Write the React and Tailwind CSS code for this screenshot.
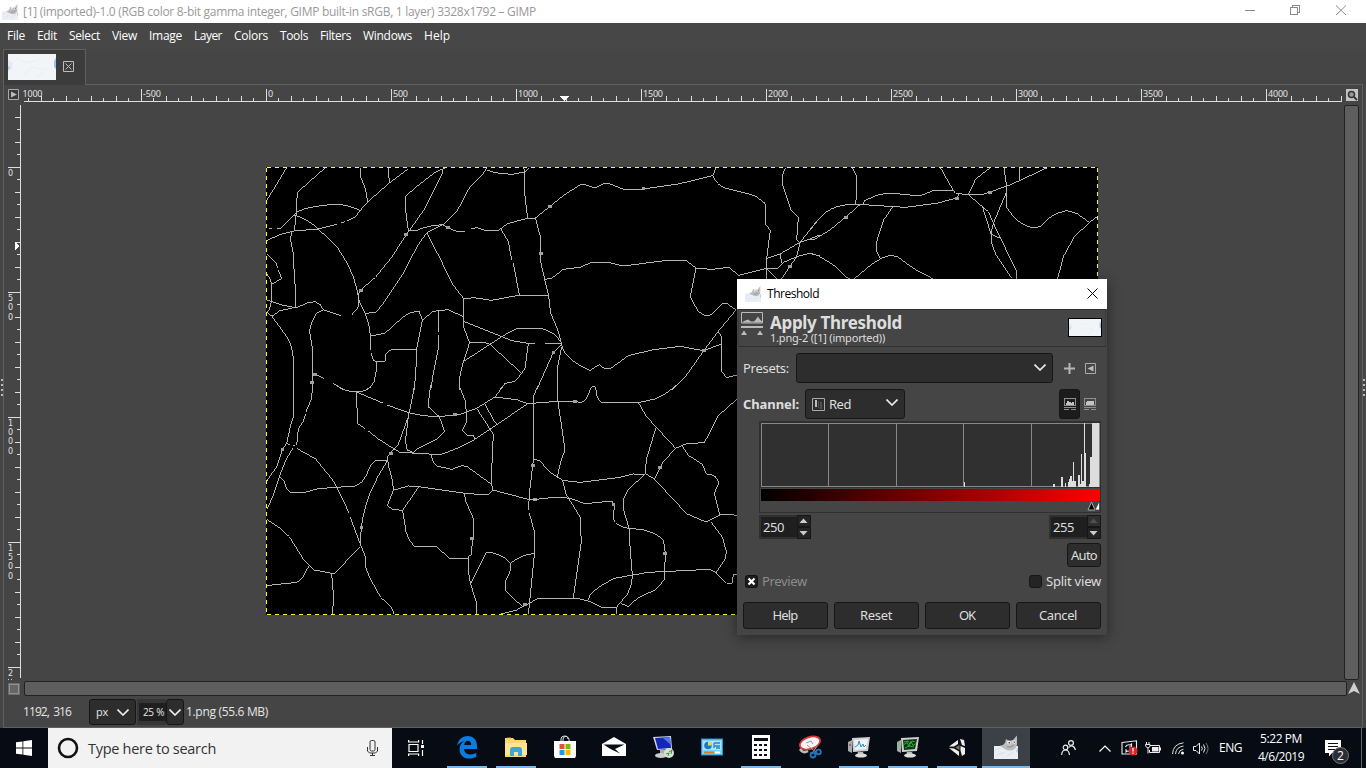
import React, { useLayoutEffect, useRef } from "react";

/* Text run whose tracking is computed so that it fills a known width. */
function Fit({ w, className = "", children }) {
  const ref = useRef(null);
  useLayoutEffect(() => {
    const el = ref.current;
    el.style.letterSpacing = "0px";
    const natural = el.getBoundingClientRect().width;
    const count = el.textContent.length;
    el.style.letterSpacing = (w - natural) / count + "px";
  }, [w, children]);
  return (
    <span ref={ref} className={"inline-block shrink-0 whitespace-pre " + className}>
      {children}
    </span>
  );
}

const UI = "font-['Open_Sans','Noto_Sans',sans-serif]";
const DLG = "font-['Noto_Sans','Open_Sans',sans-serif]";
const DIGIT = "font-['DejaVu_Sans',sans-serif]";

function Wilber({ className }) {
  return (
    <svg viewBox="0 0 24 24" className={className}>
      <path d="M0 11h24v13H0z" fill="#e9eff4" />
      <path d="M1 15l6-2M3 20l8-3M13 21l7-4" stroke="#d9e1e8" strokeWidth="1" />
      <path d="M24 12v6l-2-2z" fill="#a9cdf5" />
      <path d="M6 10.500Q11 11 12 4l3 2 4-1 4-4.500 0 9q-1 6-7 6-5 0-10-5z" fill="#bcbcbc" />
      <circle cx="15" cy="7.500" r="1.900" fill="#f0f0f0" />
      <circle cx="20" cy="7" r="1.700" fill="#f0f0f0" />
      <path d="M14.600 7h1.400v1.400H14.600zM19.600 6.500h1.300v1.300h-1.300z" fill="#444" />
      <path d="M13 12q4 1 7-2" stroke="#888" fill="none" />
    </svg>
  );
}

function Thumb({ className }) {
  return (
    <svg viewBox="0 0 48 26" preserveAspectRatio="none" className={className}>
      <rect width="48" height="26" fill="#f2f5f7" />
      <path d="M0 6l5 3-1 6-4 3z" fill="#e6eaf4" />
      <path d="M0 12l2 1-1 3-1-1z" fill="#a8cdf8" />
      <path d="M48 4l-2 3 0 6 2 2z" fill="#8fc2fa" />
      <path d="M8 4l12 5 10-3M14 22l10-9 14 3M28 24l8-6" stroke="#ebeff2" fill="none" />
    </svg>
  );
}

const MENUS = [
  ["File", 18], ["Edit", 20], ["Select", 31], ["View", 25], ["Image", 33], ["Layer", 28],
  ["Colors", 34], ["Tools", 28], ["Filters", 31], ["Windows", 49], ["Help", 26],
];

function TitleBar() {
  return (
    <div className="flex h-[23px] shrink-0 items-center bg-white text-[#999]">
      <Wilber className="ml-[2px] mr-[5px] h-4 w-4" />
      <Fit w={513} className="text-[12px] leading-[22px]">
        [1] (imported)-1.0 (RGB color 8-bit gamma integer, GIMP built-in sRGB, 1 layer) 3328x1792 – GIMP
      </Fit>
      <svg className="ml-auto h-[23px] w-[130px]" viewBox="1236 0 130 23" fill="none" stroke="#8c8c8c" shapeRendering="crispEdges">
        <path d="M1245 10.500h10M1290.500 7.500h7v7h-7zM1292.500 7V5.500h7v7H1298" />
        <path d="M1336 5.500l10 9.500M1346 5.500l-10 9.500" shapeRendering="auto" />
      </svg>
    </div>
  );
}

function MenuBar() {
  return (
    <div className="flex h-[26px] shrink-0 items-center gap-[12px] bg-[#474747] pl-[7px] text-[12px] text-white">
      {MENUS.map(([t, w]) => (
        <Fit key={t} w={w}>{t}</Fit>
      ))}
    </div>
  );
}

function TabStrip() {
  return (
    <div className="flex h-[36px] shrink-0 pl-[3px] pr-[3px]">
      <div className="flex w-[83px] items-start border-l border-r border-t border-[#606060] bg-[#3c3c3c] pt-1">
        <Thumb className="ml-1 h-[26px] w-12" />
        <svg className="ml-[7px] mt-[7px] h-[11px] w-[11px]" viewBox="0 0 11 11" fill="none" stroke="#bdbdbd">
          <path d="M.5.5h10v10H.5zM2.500 2.500l6 6M8.500 2.500l-6 6" />
        </svg>
      </div>
      <div className="flex-1 border-b border-[#606060]" />
    </div>
  );
}

const H_TICKS = [];
for (let i = 1; i <= 106; i++) {
  const x = 16 + i * 12.5;
  if (x < 24 || x > 1342) continue;
  H_TICKS.push([Math.floor(x), i % 10 === 0 ? 12 : i % 2 === 0 ? 5 : 3]);
}
const V_TICKS = [];
for (let i = -5; i <= 40; i++) {
  const y = 167 + i * 12.5;
  if (y < 105 || y > 677) continue;
  V_TICKS.push([Math.floor(y), i % 10 === 0 ? 12 : i % 2 === 0 ? 5 : 3]);
}
const H_LABELS = [
  ["1000", 22.5, 20], ["-500", 143, 18], ["0", 268, 5], ["500", 393, 15], ["1000", 518, 20], ["1500", 643, 20],
  ["2000", 768, 20], ["2500", 893, 20], ["3000", 1018, 20], ["3500", 1143, 20], ["4000", 1268, 20],
];
const V_LABELS = [["0", 176], ["500", 301], ["1000", 425.5], ["1500", 550.5], ["2", 676]];

function HRuler() {
  return (
    <svg className="h-[18px] w-[1324px] shrink-0" viewBox="22 86 1324 18" shapeRendering="crispEdges">
      <path d="M24 101.500H1342" stroke="#ddd" />
      {H_TICKS.map(([x, h]) => (
        <rect key={x} x={x} y={101 - h} width="1" height={h} fill="#ddd" />
      ))}
      {H_LABELS.map(([t, x, w]) => (
        <text key={x} x={x} y="97" fontSize="9" fill="#e2e2e2" textLength={w} className={DLG}>{t}</text>
      ))}
      <path d="M559.500 96h10l-5 5.500z" fill="#fff" />
    </svg>
  );
}

function VRuler() {
  return (
    <svg className="h-[577px] w-[18px] shrink-0" viewBox="4 103 18 577" shapeRendering="crispEdges">
      <path d="M20.500 105V678" stroke="#ddd" />
      {V_TICKS.map(([y, w]) => (
        <rect key={y} x={20 - w} y={y} width={w} height="1" fill="#ddd" />
      ))}
      {V_LABELS.map(([t, y]) =>
        t.split("").map((c, i) => (
          <text key={y + "-" + i} x="8" y={y + i * 9.4} fontSize="8" fill="#e2e2e2" className={DIGIT}>{c}</text>
        ))
      )}
      <path d="M8 679h1v1H8zM11 679h1v1h-1z" fill="#ccc" />
      <path d="M15 241.500v9l5-4.500z" fill="#fff" />
    </svg>
  );
}

/* Crack outlines, one tile per region, three units to a pixel. */
const TILES = [
  {
    o: [260, 160],
    d: "M79 24L52 70L28 108L19 125M195 24L112 97L108 165L103 214M19 242Q60 220 103 213L175 207L230 193M242 188l14-3M262 182L285 172L300 152L323 126L388 69L445 26M323 126L316 85L300 45L303 24M385 24L388 69M300 152Q270 135 228 133Q150 137 112 155L103 165L63 205L50 206M28 206h8M103 165Q145 178 175 207L232 262Q262 305 278 345L290 385L298 425L316 460L328 500L332 540L333 570M334 580L340 600L348 604L375 604L377 583L393 569L468 569M348 604L350 625L342 665L330 683L318 690M94 214L92 240L100 280L103 350L108 405L106 442M19 280L48 310L53 325M55 330L65 355L35 373L28 352L19 340M35 373V420L28 450L19 456M19 420L70 436L108 443L145 428L165 425L180 433L190 449L242 467M19 456L36 469L60 452L106 442M36 469L80 530Q100 560 100 605V690M190 449L170 459Q150 490 149 515L157 565V690M157 643L172 645L193 657M220 670L250 690M274 466L292 446L294 440M302 390L346 352L394 293L438 226L495 145L548 38L547 30M302 390L294 405L296 440M445 213L437 150V108L470 80L525 37L555 24M445 213L470 212Q500 196 550 194L592 152L630 80L665 47L680 24M548 194L563 203L592 215H614M634 206L650 203L675 211H714L722 206L745 190L800 176L826 174L870 139M680 30L705 38L755 43L795 36L808 24M792 24L794 100L803 176M548 194L500 218L470 262L430 340L370 430L348 457L316 460M500 218L540 295L578 373L612 417M722 206L745 245L755 300M760 310L778 405M612 417L640 413L695 421L775 406H866M612 417L610 500L628 546L625 560L610 605L597 660L598 690M610 470L565 449L520 454L487 480L470 565L467 650L461 690M487 480L477 453Q450 455 435 467Q405 490 375 520L332 528M535 452V515M535 525V565L520 640L512 690M610 484L755 542L805 550H824M856 550H905M610 605L690 553L730 527L770 506H845Q885 515 905 550M628 548H675L690 553L785 640M805 550L795 625L785 640L765 664L735 670L720 688M826 174L841 230L843 310L854 358L866 408L872 460L893 508L905 552L880 577L830 690",
    n: [[302, 390], [437, 224], [563, 203], [870, 139], [843, 280], [880, 577], [164, 644], [156, 667]],
  },
  {
    o: [260, 385],
    d: "M100 10V95L92 120L80 175L67 195L50 245L19 290M158 10L153 45L138 80M137 88L130 108L115 132L110 180M19 378L42 325L60 270L80 220L100 188M78 175L90 180M98 183h8M110 190L167 222L218 285L230 306L268 385M270 395L302 480L316 515V545L330 580L362 637L395 668L403 688M60 277L72 287L80 312L92 322H135L175 311L285 303L305 292L318 272L335 236L347 227H382M382 227L355 272L330 325Q308 385 304 428L300 480M302 485L222 566L162 555L133 527L88 455L60 430L19 402M147 542L127 580L110 592L19 602M215 566L221 640L217 688M228 0Q255 20 290 21Q320 20 335 0M290 21L292 115L315 130M325 138L355 162L393 186L420 202L540 209Q600 190 645 163L690 133L803 56M290 21L370 55M380 60L450 84Q490 95 538 95L600 88L650 70L705 36L732 0M465 0L445 95L415 178L382 215L385 240L398 290L400 316L382 362L398 373L428 376L475 307M512 0L504 65L538 95L554 140L530 162L475 190L460 202M445 95L436 170L442 195L460 202M597 0L617 50L620 110L607 135L622 151H640L645 163M650 70L700 148L693 300M675 56L700 105L713 118M705 36L770 44L803 56L895 49M400 316L445 303L475 305L615 325L685 330L698 315L805 343L825 343M514 209Q518 235 530 243L575 253L605 242L620 244L695 298L698 315M428 376L438 440Q448 470 465 485H530L568 520H628M613 328L618 350L642 405V430L633 510L625 515V560L632 597L650 655V688M632 595L678 503Q720 500 752 535Q780 510 823 505M752 535L750 560L735 593L738 618L787 665M835 0L822 30L820 225L810 310L805 375M808 385L823 440V510L805 688M720 688L770 675L835 640",
    n: [[67, 194], [392, 205], [304, 428], [585, 89], [636, 461], [818, 241], [824, 343], [795, 658]],
  },
  {
    o: [520, 160],
    d: "M90 139L135 103L180 75L195 74L224 84L250 72H270L310 88L370 87L475 72L578 47L588 24M75 358L95 355L130 328L180 322L215 307H265L310 318L425 303L497 301L530 325L575 328L628 322L655 346L740 325L775 325L788 308L830 290L870 280L900 288M578 47Q590 75 615 84L705 107L735 130L737 195L751 210L740 295V325V356M796 24L788 45V75L812 148L835 173L830 240L840 248L830 290L785 356M740 295L780 282L840 247L875 235L900 225M780 282L785 308M840 247L900 173M740 325L770 356M528 325L511 410L532 450Q545 467 560 467L575 464L605 432L620 430L648 450L594 515L552 571L500 645L456 690M125 552Q125 570 145 590Q170 615 210 631L238 614L255 627H270L325 587L400 569L480 559L550 572L605 552M594 515L605 530V635L620 653L650 645M125 560L113 620V690",
    n: [[370, 86], [810, 319], [551, 571]],
  },
  {
    o: [520, 385],
    d: "M112 0L114 50L135 195L122 230L112 275M112 50L165 49L185 53L200 40L213 8L219 3L227 8L232 38L245 54L355 53L405 42Q440 28 468 0M355 53L380 95L412 130L467 190L500 176L553 173L595 92L650 43M408 128L380 220L375 265L403 282L430 230L467 190M40 222L60 228L90 262L128 286L180 292L300 277L340 267L375 268L325 313L311 342V375L327 430L331 500L337 570L335 595L322 628L290 666L288 686M403 282L500 386L558 411L600 390L620 387L650 391M487 183L505 211L546 237L560 268Q590 265 596 295L583 325L600 393M572 410L608 458L619 500L615 523L588 563L620 595H636L640 569H652M40 344L112 336L150 340L195 356L275 348L283 360L280 402Q290 425 327 430L370 434L405 446L430 464L436 505L433 585L405 615L355 638L325 664L302 655M128 286L137 325L180 396L184 470L160 638M50 640H170L205 648L248 668L290 667M205 645L210 630L235 607L282 580L385 562L570 553L588 563",
    n: [[165, 50], [420, 248], [280, 358], [434, 505]],
  },
  {
    o: [810, 160],
    d: "M127 24L140 50V110L136 133M30 173Q60 140 105 135L160 134L285 142L380 130L440 114L446 103M160 134L163 122L205 104L240 99L328 108L370 92L430 92L437 100L475 104L515 105L590 78L600 75L710 24M392 24L430 92M30 173L0 208M150 134L105 173L60 210L15 237L0 239M248 141L221 180L200 245V275L212 296M25 287L75 318L108 352L120 356M0 280L25 287M133 356L185 313L212 296L240 286L262 290L310 325L368 356M475 104L497 57L540 24M582 24L590 78V142L610 170Q640 200 670 203L690 200L720 172Q745 155 770 152L800 160L838 187L862 170M838 187L792 232L760 290L743 356M475 104L535 155L555 200L620 335V356M590 95L550 190L543 222L545 250L558 285L605 354M518 142L543 222L573 236M630 24V60",
    n: [[108, 173], [440, 114], [540, 97]],
  },
];

function Cracks() {
  return (
    <svg className="h-[448px] w-[832px]" viewBox="266 167 832 448" shapeRendering="crispEdges" fill="none">
      <rect x="266" y="167" width="832" height="448" fill="#000" />
      {TILES.map(({ o, d, n }) => (
        <g key={o.join()} transform={`translate(${o[0]} ${o[1]}) scale(0.33333)`}>
          <path d={d} stroke="#b4b4b4" strokeWidth="3" />
          {n.map(([x, y]) => (
            <rect key={x + "," + y} x={x - 5} y={y - 4} width="11" height="9" fill="#a0a0a0" />
          ))}
        </g>
      ))}
      <path d="M266 167.500H1098M266 614.500H1098M266.500 167V615M1097.500 167V615" stroke="#000" />
      <path d="M266 167.500H1098M266 614.500H1098M266.500 167V615M1097.500 167V615" stroke="#ff0" strokeDasharray="4 4" strokeDashoffset="-1" />
    </svg>
  );
}

function Editor() {
  return (
    <div className="mx-[3px] flex h-[643px] shrink-0 flex-col border-b border-l border-r border-[#606060]">
      <div className="flex h-[18px] items-start">
        <svg className="mx-1 mt-1 h-[11px] w-[11px] shrink-0" viewBox="0 0 11 11">
          <path d="M.5.5h10v10H.5z" fill="#3a3a3a" stroke="#aaa" />
          <path d="M3 2.500v6l6-3z" fill="#bbb" />
        </svg>
        <div className="-ml-px mt-px flex"><HRuler /></div>
        <svg className="mt-[4px] h-3 w-3 shrink-0" viewBox="0 0 12 12">
          <rect width="12" height="12" fill="#c4c4c4" />
          <circle cx="5.500" cy="5.500" r="3" fill="#999" stroke="#333" strokeWidth="1.500" />
          <path d="M8 8l3 3" stroke="#333" strokeWidth="1.800" />
        </svg>
      </div>
      <div className="flex h-[577px]">
        <VRuler />
        <div className="flex flex-1 pl-[244px] pt-[64px]"><Cracks /></div>
        <div className="mr-[3px] mt-[2px] h-[575px] w-[15px] rounded-[2px] border border-[#222] bg-[#5e5e5e]" />
      </div>
      <div className="flex h-[17px] items-center">
        <svg className="ml-1 h-3 w-3" viewBox="0 0 12 12">
          <rect width="12" height="12" fill="#6c6c6c" />
          <rect x="1.500" y="1.500" width="9" height="9" fill="#666" stroke="#bbb" strokeDasharray="1 1" />
        </svg>
        <div className="ml-1 h-[15px] w-[1323px] rounded-[2px] border border-[#222] bg-[#5e5e5e]" />
        <svg className="ml-[1px] h-[13px] w-[12px]" viewBox="0 0 12 13">
          <path d="M6 0l6 12-6-3-6 3z" fill="#d0d0d0" />
        </svg>
      </div>
      <div className="flex h-[30px] items-center text-[12px] text-[#e6e6e6]">
        <Fit w={48} className="ml-[19px] [word-spacing:2px]">1192, 316</Fit>
        <div className="ml-[18px] flex h-[26px] w-[47px] items-center rounded-[3px] border border-[#161616] bg-[#2d2d2d] pl-[6px] text-[11px]">
          <Fit w={12}>px</Fit>
          <Chevron className="ml-[9px] h-[7px] w-3" />
        </div>
        <div className="ml-[1px] flex h-[26px] w-[29px] items-center bg-[#363636] pl-[2px]">
          <div className="flex h-[18px] w-[27px] items-center bg-[#1f1f1f] pl-1 text-[10px]"><Fit w={21} className="[word-spacing:1px]">25 %</Fit></div>
        </div>
        <div className="flex h-[26px] w-[18px] items-center justify-center rounded-[3px] border border-[#161616] bg-[#2d2d2d]">
          <Chevron className="h-[7px] w-3" />
        </div>
        <Fit w={82} className="ml-[2px]">1.png (55.6 MB)</Fit>
      </div>
    </div>
  );
}

function Chevron({ className }) {
  return (
    <svg viewBox="0 0 12 7" className={className} fill="none" stroke="#eee" strokeWidth="1.600">
      <path d="M.5.500L6 6L11.500.500" />
    </svg>
  );
}

const BARS = [
  [684, 96, 3], [951, 102, 6], [975, 81, 6], [987, 99, 3], [996, 96, 3], [999, 87, 3], [1002, 78, 6], [1008, 93, 3],
  [1011, 37, 3], [1014, 93, 6], [1026, 75, 6], [1032, 102, 3], [1035, 12, 3], [1038, 93, 6], [1044, -80, 3],
  [1047, 9, 3], [1059, 102, 3], [1062, 21, 6], [1068, -80, 21],
];

function Histogram() {
  return (
    <svg className="h-[92px] w-[342px] shrink-0" viewBox="759 421 342 92" shapeRendering="crispEdges">
      <defs>
        <linearGradient id="red"><stop offset="0" stopColor="#000" /><stop offset="1" stopColor="#f00" /></linearGradient>
      </defs>
      <rect x="759.500" y="421.500" width="341" height="91" fill="#454545" stroke="#303030" />
      <rect x="760" y="422" width="340" height="66" fill="#303030" />
      <path d="M761.500 423.500h338v63h-338zM828.500 423v64M896.500 423v64M963.500 423v64M1031.500 423v64" fill="none" stroke="#888" />
      <g transform="translate(736 450) scale(0.33333)" fill="#ddd">
        {BARS.map(([x, y, w]) => <rect key={x} x={x} y={y} width={w} height={111 - y} />)}
      </g>
      <rect x="761" y="489" width="339" height="12" fill="url(#red)" />
      <g shapeRendering="auto">
        <path d="M1091.500 502l3.500 8h-7z" fill="#000" stroke="#aaa" />
        <path d="M1099.500 501v9h-4.500z" fill="#fff" stroke="#222" strokeWidth=".6" />
      </g>
    </svg>
  );
}

function Spin({ value, dim }) {
  return (
    <div className="flex h-6 w-[52px] bg-[#303030]">
      <div className="my-[2px] ml-[2px] flex w-9 items-center bg-[#1f1f1f] pl-[2px]"><Fit w={21}>{value}</Fit></div>
      <svg className="h-6 w-[14px]" viewBox="0 0 14 24">
        <path d="M.5.5h13v11H.5zM.5 12.500h13v11H.5z" fill="#242424" stroke="#161616" />
        {dim && <path d="M1 1h12v10H1z" fill="#303030" />}
        <path d="M6.500 3.500l4 4.500h-8z" fill={dim ? "#505050" : "#ccc"} />
        <path d="M6.500 20.500l4-4.500h-8z" fill="#ccc" />
      </svg>
    </div>
  );
}

function ScaleIcon({ log }) {
  return (
    <svg className="h-3 w-3" viewBox="0 0 12 12" fill="none" stroke="#8e8e8e" shapeRendering="crispEdges">
      <path d="M.5.5h11v7H.5z" />
      <path d={log ? "M2 7V4l1-1h6l1 1v3z" : "M2 7V5h1V3h2v1h2v1h1V4h2v3z"} fill="#c4c4c4" stroke="none" />
      <path d="M0 9h12v1H0zM0 11h5v1H0zM7 11h5v1H7z" fill="#8e8e8e" stroke="none" />
    </svg>
  );
}

function Btn({ children, w }) {
  return (
    <div className="flex h-[27px] w-[85px] items-center justify-center rounded-[3px] border border-[#161616] bg-[#2d2d2d] pb-[2px] pr-px">
      <Fit w={w}>{children}</Fit>
    </div>
  );
}

function Dialog() {
  return (
    <div className={"absolute left-[737px] top-[279px] flex h-[356px] w-[370px] flex-col bg-[#454545] text-[13px] leading-[16px] text-[#dedede] shadow-[0_2px_12px_rgba(0,0,0,0.45)] " + DLG}>
      <div className={"flex h-[30px] shrink-0 items-center bg-white text-[12px] text-black " + UI}>
        <Wilber className="ml-2 mr-[6px] h-4 w-4" />
        <Fit w={52}>Threshold</Fit>
        <svg className="mb-px ml-auto mr-[9px] h-[11px] w-[11px]" viewBox="0 0 11 11" stroke="#000"><path d="M.5.500l10 10M10.500.500l-10 10" /></svg>
      </div>
      <div className="mx-px flex h-[38px] shrink-0 border border-t-[#303030] border-x-[#3c3c3c] border-b-[#303030]">
        <svg className="ml-[2px] mt-[2px] h-6 w-[23px]" viewBox="0 0 23 24">
          <path d="M.5.5h21v10.500h-21z" fill="none" stroke="#bbb" />
          <path d="M2 10.500V9.500l5-2 3 2h3l1-1 3-4 2 3 2 2v1z" fill="#bbb" />
          <path d="M0 14h22v2H0zM0 23l3-4.500 3 4.500zM16 23l3-4.500 3 4.500z" fill="#bbb" />
        </svg>
        <div className="ml-[6px] flex flex-col items-start">
          <Fit w={132} className="mt-[3px] text-[17px] font-bold leading-[20px]">Apply Threshold</Fit>
          <Fit w={115} className="mt-[-3px] text-[11px] leading-[15px]">1.png-2 ([1] (imported))</Fit>
        </div>
        <Thumb className="ml-auto mr-[3px] mt-[8px] h-[19px] w-[34px] border border-black" />
      </div>
      <div className="mt-[6px] flex h-[30px] shrink-0 items-center pl-[6px]">
        <Fit w={46}>Presets:</Fit>
        <div className="ml-[7px] flex h-[30px] w-[257px] items-center rounded-[3px] border border-[#161616] bg-[#2d2d2d]">
          <Chevron className="ml-auto mr-[6px] mt-[-2px] h-[7px] w-3" />
        </div>
        <svg className="ml-[11px] h-[11px] w-[11px]" viewBox="0 0 11 11"><path d="M4.500 0h2v4.500H11v2H6.500V11h-2V6.500H0v-2h4.500z" fill="#b5b5b5" /></svg>
        <svg className="ml-[10px] h-[11px] w-[11px]" viewBox="0 0 11 11"><path d="M.5.5h10v10H.5z" fill="none" stroke="#aaa" /><path d="M8.500 2.500v6l-6-3z" fill="#bbb" /></svg>
      </div>
      <div className="mt-[6px] flex h-[30px] shrink-0 items-center pl-[6px]">
        <Fit w={56} className="font-bold">Channel:</Fit>
        <div className="ml-[6px] flex h-[30px] w-[100px] items-center rounded-[3px] border border-[#161616] bg-[#2d2d2d] pl-[6px]">
          <svg className="h-[13px] w-[13px]" viewBox="0 0 13 13"><path d="M.5.5h12v12H.5z" fill="none" stroke="#aaa" /><path d="M3 2h2v7H3z" fill="#bbb" /><path d="M6 3h1v7H6zM8 4h2v7H8z" fill="#505050" /></svg>
          <Fit w={22} className="ml-[4px]">Red</Fit>
          <Chevron className="ml-auto mr-[6px] mt-[-3px] h-[7px] w-3" />
        </div>
        <div className="ml-[154px] flex h-[30px] w-[21px] items-center justify-center rounded-[3px] border border-[#161616] bg-[#1c1c1c]"><ScaleIcon /></div>
        <div className="ml-[4px] flex"><ScaleIcon log /></div>
      </div>
      <div className="mt-[2px] flex shrink-0 pl-[22px]"><Histogram /></div>
      <div className="mt-[2px] flex shrink-0 justify-between pl-[22px] pr-[6px]">
        <Spin value="250" />
        <Spin value="255" dim />
      </div>
      <div className="mt-[4px] flex shrink-0 justify-end pr-[6px]">
        <div className="flex h-6 w-[34px] items-center justify-center rounded-[3px] border border-[#161616] bg-[#2d2d2d]"><Fit w={26}>Auto</Fit></div>
      </div>
      <div className="mt-[6px] flex h-[16px] shrink-0 items-center pl-[8px] pr-[6px]">
        <svg className="mt-px h-[13px] w-[13px]" viewBox="0 0 13 13"><rect x=".5" y=".5" width="12" height="12" rx="2" fill="#1c1c1c" stroke="#111" /><path d="M3.500 3.500l6 6M9.500 3.500l-6 6" stroke="#fff" strokeWidth="2.200" /></svg>
        <Fit w={45} className="ml-[4px] text-[#8c8c8c]">Preview</Fit>
        <div className="ml-auto mt-px h-[13px] w-[13px] rounded-[3px] border border-[#161616] bg-[#242424]" />
        <Fit w={55} className="ml-[4px]">Split view</Fit>
      </div>
      <div className="mt-[13px] flex shrink-0 gap-[6px] pl-[6px]">
        <Btn w={25}>Help</Btn>
        <Btn w={32}>Reset</Btn>
        <Btn w={16}>OK</Btn>
        <Btn w={38}>Cancel</Btn>
      </div>
    </div>
  );
}

function Monitor({ green }) {
  return (
    <svg className="h-6 w-6" viewBox="0 0 24 24">
      <path d="M1 7l4-2v13l-4-2z" fill="#aaa" />
      <path d="M2 9h2v2H2z" fill={green ? "#5d5" : "#777"} />
      <path d="M5 3l18-1-2 14-15 1z" fill="#cfcfcf" />
      <path d="M7 5l14-1-2 10-11 1z" fill={green ? "#0c3514" : "#eef3f5"} />
      <path d={green ? "M8 7l4-1 2 3 2-3 3 1M8 9.500l3-2 2 4 2-5 2 4 3-2M9 13l4-2 5 1" : "M8 12l3-2 1-4 2 6 2-3 1 3 2-2"} stroke={green ? "#2fae3a" : "#2c8bc0"} fill="none" />
      <path d="M11 17h5l1 3H10z" fill="#bbb" />
      <ellipse cx="14" cy="20.500" rx="6" ry="2" fill="#ddd" />
    </svg>
  );
}

const APPS = [
  { on: true, icon: (
    <svg className="h-6 w-6" viewBox="0 0 24 24"><path d="M2 11C3 4.500 7.500 1 12.500 1 19 1 22 5.500 22 11v3H9c.3 4 3.500 5.500 6.500 5.500 2.500 0 4.300-.7 5.800-1.700v4.300C19.500 23 17 23.600 14.500 23.600 8.500 23.600 4.500 20 4.500 14c0-3.500 2-6.500 5-8C6.500 6.500 3.500 8.500 2 11zm7.200-1h7c0-3-1.400-4.300-3.400-4.300S9.500 7.300 9.200 10z" fill="#0c7ce0" /></svg>) },
  { on: true, icon: (
    <svg className="h-6 w-6" viewBox="0 0 24 24"><path d="M1 4V3h8l2 2h11v17H1z" fill="#f8d775" /><path d="M1 8h22v12H1z" fill="#ffe594" /><path d="M6 21v-6q0-3 3-3h6q3 0 3 3v6h-4v-4h-4v4z" fill="#35a8dc" /><path d="M3 3h4" stroke="#ef9d25" /></svg>) },
  { icon: (
    <svg className="h-6 w-6" viewBox="0 0 24 24"><path d="M1 6h22v15l-1 2H2l-1-2z" fill="#fff" /><path d="M8 6V4q0-3 3.500-3T16 4v2M10 6V4q0-2 3-3 2 1 2 3" fill="none" stroke="#ddd" /><path d="M6.500 9h5v5h-5z" fill="#e8502b" /><path d="M12.500 9h5v5h-5z" fill="#7fb719" /><path d="M6.500 15h5v5h-5z" fill="#1d9be6" /><path d="M12.500 15h5v5h-5z" fill="#fbb813" /></svg>) },
  { icon: (
    <svg className="h-6 w-6" viewBox="0 0 24 24"><path d="M0 9L12 2l12 7v12H0z" fill="#fff" /><path d="M1.500 9.500h21L13 14l5 4.500L8.500 14z" fill="#070c15" /></svg>) },
  { icon: (
    <svg className="h-6 w-6" viewBox="0 0 24 24"><path d="M2 2L20 1l1 13-15 1z" fill="#d2d8ea" /><path d="M4 3l15-1 1 11-13 1z" fill="#1428b8" /><path d="M12 3l7-1 1 8z" fill="#5577e5" /><path d="M9 15h5v4H9z" fill="#aaa" /><ellipse cx="10" cy="20.500" rx="6" ry="2.500" fill="#ccc" /><circle cx="18" cy="18" r="5" fill="#d8e0d8" /><path d="M15 19l3-1-1 3M18 17l3-2-1 4" stroke="#3e8f3e" fill="none" /></svg>) },
  { icon: (
    <svg className="h-6 w-6" viewBox="0 0 24 24"><rect x="1.500" y="4" width="21" height="16" fill="#7ed0f4" stroke="#2b8fcf" /><path d="M3 6h18v9H3z" fill="#aee5fb" /><circle cx="8" cy="10.500" r="3.800" fill="#177cc4" /><path d="M8 10.500V6.700a3.800 3.800 0 0 1 3.800 3.800z" fill="#ffd35a" /><path d="M14 8h6M14 11h6M16 13h4M14 8v5" stroke="#2c83bd" strokeWidth="1.300" /><path d="M4 17.500h10" stroke="#e1781e" strokeWidth="2" /><path d="M15 17.500h5" stroke="#fff" strokeWidth="2" /></svg>) },
  { on: true, icon: (
    <svg className="h-6 w-6" viewBox="0 0 24 24"><path d="M3 0h18v24H3z" fill="#fff" /><path d="M5 3h14v3H5zM5 9h3v2H5zM10 9h3v2h-3zM15 9h3v2h-3zM5 14h3v2H5zM10 14h3v2h-3zM15 14h3v2h-3zM5 19h3v2H5zM10 19h3v2h-3zM15 19h3v2h-3z" fill="#070c15" /></svg>) },
  { icon: (
    <svg className="h-6 w-6" viewBox="0 0 24 24"><ellipse cx="12" cy="8" rx="10.500" ry="6" fill="#f5f5f5" stroke="#d63a3a" strokeWidth="1.800" transform="rotate(-18 12 8)" /><path d="M2 14q3 5 8 2" stroke="#bbb" strokeWidth="2.500" fill="none" /><path d="M8 8l5-2 2 3M9 10l9 7M19 11l-5 8" stroke="#999" fill="none" /><circle cx="15" cy="20" r="2.500" fill="none" stroke="#2276bd" strokeWidth="1.800" /><circle cx="20.500" cy="17" r="2.300" fill="none" stroke="#2276bd" strokeWidth="1.800" /></svg>) },
  { on: true, icon: <Monitor /> },
  { on: true, icon: <Monitor green /> },
  { on: true, icon: (
    <svg className="h-6 w-6" viewBox="0 0 24 24"><path d="M3 12L16 2l4 3v14l-4 4z" fill="#111" /><path d="M4 11.500L13 5v4l-4 2.500zM4 13l5 .5 5 3V21zM15 4l4 1 1 6-3-1zM15.500 15.500V11l4.500 2v6l-3 2z" fill="#eee" /><path d="M10.500 12.500l4-2.500v5z" fill="#777" /></svg>) },
  { on: true, active: true, icon: <Wilber className="h-6 w-6" /> },
];

function Taskbar() {
  return (
    <div className="flex h-10 shrink-0 items-stretch bg-[#060b14] text-white">
      <div className="flex w-12 items-center pl-4">
        <svg className="h-4 w-4" viewBox="0 0 16 16" fill="#fff"><path d="M0 2.300L6.500 1.400V7.500H0zM7.300 1.300L16 0v7.500H7.300zM0 8.400h6.500v6.200L0 13.700zM7.300 8.400H16V16l-8.700-1.300z" /></svg>
      </div>
      <div className="flex w-[344px] items-center bg-[#f2f2f2] pl-[9px] pr-[13px] text-[15px] text-[#333]">
        <svg className="h-[22px] w-[22px]" viewBox="0 0 22 22"><circle cx="11" cy="11" r="9" fill="none" stroke="#111" strokeWidth="2.600" /></svg>
        <Fit w={128} className="ml-[9px] mt-px text-[14.5px]">Type here to search</Fit>
        <svg className="ml-auto h-4 w-[13px]" viewBox="0 0 13 16" fill="none" stroke="#333"><rect x="4" y=".5" width="5" height="10.500" rx="1.500" /><path d="M1.500 7v4l2 2h6l2-2V7M6.500 13v2.500M4 15.500h5" /></svg>
      </div>
      <div className="mr-[2px] flex w-12 items-center justify-center">
        <svg className="h-4 w-4" viewBox="0 0 16 16" fill="none" stroke="#fff" strokeWidth="1.200"><path d="M1 4.500h9v7H1zM.6 0v2h10V0M.6 16v-2h10v2M14.500 0v4M14.500 10v6" /><path d="M13 5h3v3h-3z" fill="#fff" stroke="none" /></svg>
      </div>
      {APPS.map((a, i) => (
        <div key={i} className={"flex flex-col items-center " + (a.active ? "w-12 bg-[#3c4148]" : "w-[49px]") + (i === 10 ? " mr-px" : "")}>
          <div className="flex h-[38px] items-center justify-center">{a.icon}</div>
          {a.on && <div className={"h-[2px] bg-[#76b9ed] " + (a.active ? "w-full" : "w-10")} />}
        </div>
      ))}
      <div className="ml-[31px] flex flex-1 items-center">
        <svg className="h-4 w-[15px]" viewBox="0 0 15 16" fill="none" stroke="#eee" strokeWidth="1.200"><circle cx="4.500" cy="7.500" r="2.300" /><path d="M.6 15q.5-5 3.900-5t4 5" /><circle cx="10" cy="3" r="2.400" /><path d="M7.500 7.500q5-4 7 2.500" /></svg>
        <svg className="ml-[23px] h-[7px] w-3" viewBox="0 0 12 7" fill="none" stroke="#fff" strokeWidth="1.200"><path d="M.5 6.500L6 1l5.500 5.500" /></svg>
        <svg className="ml-[10px] h-4 w-[17px]" viewBox="0 0 17 16" fill="none" stroke="#eee" strokeWidth="1.100"><path d="M1 2.500L15.500.800V14H1z" /><path d="M4.500 7q1-3 5-2l1-1v3H8M5 9v3l1-1q3 1 4-2" /><circle cx="12" cy="11" r="4.500" fill="#e0202c" stroke="none" /><path d="M12 8v3.500M12 12.500v1.200" stroke="#fff" strokeWidth="1.300" /></svg>
        <svg className="ml-[7px] h-3 w-4" viewBox="0 0 16 12" fill="none" stroke="#eee"><path d="M5 3.500h9.500v7H4.500V8" /><path d="M7 5h6.500v4.500H7zM14.500 5.500H16v3h-1.500z" fill="#eee" stroke="none" /><path d="M1.500 0v2.500M4 0v2.500M.5 2.500h4.500v2L3 6 .8 4.500zM3 6v5.500" /></svg>
        <svg className="ml-[11px] h-[13px] w-3" viewBox="0 0 12 13" fill="none" stroke="#ddd"><path d="M.5 12Q1 2 11.500.800M3.500 12Q4 5 11.500 4M6.500 12Q7 8 11.500 7.200" /><circle cx="10.500" cy="11" r="1.500" fill="#fff" stroke="none" /></svg>
        <svg className="ml-[9px] h-[13px] w-4" viewBox="0 0 16 13" fill="none" stroke="#eee"><path d="M.5 4.500H3L6.500 1v11L3 8.500H.5z" /><path d="M8.500 4.500q1.500 2 0 4M10.500 2.500q3 4 0 8" /><path d="M13 1q4 5.500 0 11" stroke="#777" /></svg>
        <Fit w={23} className="ml-[10px] text-[12px]">ENG</Fit>
        <div className="ml-[16px] flex w-[46px] flex-col items-center text-[12px] leading-[18px]">
          <Fit w={42}>5:22 PM</Fit>
          <Fit w={46}>4/6/2019</Fit>
        </div>
        <svg className="ml-[21px] mt-[9px] h-[25px] w-[25px]" viewBox="0 0 25 25"><path d="M0 0h16v13H7l-3 3.500V13H0z" fill="#fff" /><path d="M3 3.500h10M3 6.500h10M3 9.500h7" stroke="#0a0e16" /><circle cx="15.500" cy="15.500" r="8" fill="#2b2e34" stroke="#777" /><text x="12" y="20" fontSize="12" fill="#fff" className={UI}>2</text></svg>
      </div>
      <div className="w-[5px] border-l border-[#666]" />
    </div>
  );
}

function Grip({ className }) {
  return (
    <svg className={"absolute top-[379px] h-[18px] w-[2px] " + className} viewBox="0 0 2 18" fill="#bbb">
      <path d="M0 0h2v2H0zM0 5h2v2H0zM0 10h2v2H0zM0 15h2v2H0z" />
    </svg>
  );
}

export default function App() {
  return (
    <div className={"relative flex h-[768px] w-[1366px] flex-col overflow-hidden bg-[#454545] " + UI}>
      <TitleBar />
      <MenuBar />
      <TabStrip />
      <Editor />
      <Taskbar />
      <Grip className="left-px" />
      <Grip className="left-[1363px]" />
      <Dialog />
    </div>
  );
}
